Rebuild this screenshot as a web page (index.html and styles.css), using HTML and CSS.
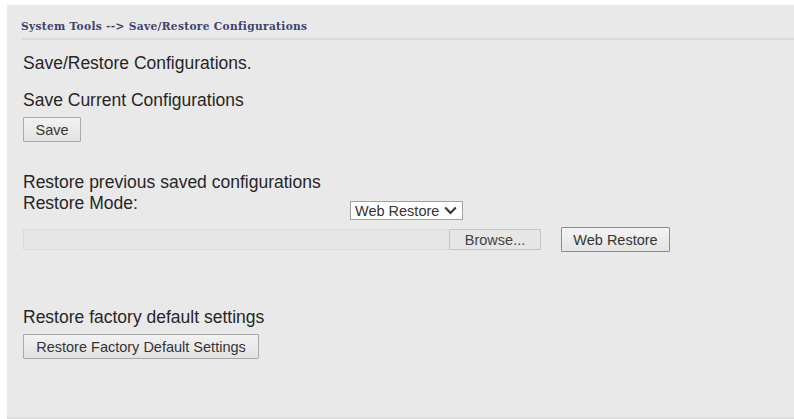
FILE: index.html
```html
<!DOCTYPE html>
<html>
<head>
<meta charset="utf-8">
<link rel="stylesheet" href="styles.css">
</head>
<body>
<div class="panel">
  <div class="crumb">System Tools --&gt; Save/Restore Configurations</div>
  <div class="content">
    <div class="title">Save/Restore Configurations.</div>

    <div class="heading first">Save Current Configurations</div>
    <button class="btn save">Save</button>

    <div class="heading restore">Restore previous saved configurations</div>
    <div class="mode-row">
      <span class="label">Restore Mode:</span>
      <span class="select">Web Restore
        <svg class="chev" width="13" height="9" viewBox="0 0 13 9"><path d="M1.2 1.5 L6.5 7 L11.8 1.5" fill="none" stroke="#333" stroke-width="2"/></svg>
      </span>
    </div>
    <div class="file-row">
      <span class="file-field"></span>
      <span class="btn browse">Browse...</span>
      <button class="btn web">Web Restore</button>
    </div>

    <div class="heading factory">Restore factory default settings</div>
    <button class="btn factory-btn">Restore Factory Default Settings</button>
  </div>
</div>
</body>
</html>
```

FILE: styles.css
```css
html, body {
  margin: 0;
  padding: 0;
  background: #ffffff;
}

body {
  padding: 5px 0 0 7px;
  font-family: "Liberation Sans", Arial, sans-serif;
}

.panel {
  background: #e9e9e9;
  height: 414px;
  border-bottom: 2px solid #dcdcdc;
  box-sizing: border-box;
  padding-left: 14px;
}

.crumb {
  font-family: "DejaVu Serif", serif;
  font-weight: bold;
  font-size: 10.6px;
  letter-spacing: 0.33px;
  color: #3d4270;
  padding-top: 14px;
  height: 19px;
  line-height: 15px;
  border-bottom: 2px solid #dadada;
}

.content {
  padding-left: 2px;
  color: #262626;
}

.title,
.heading,
.label {
  font-size: 17.5px;
  line-height: 20px;
}

.title { margin-top: 13px; }

.heading.first { margin-top: 17px; }
.heading.restore { margin-top: 30px; }
.heading.factory { margin-top: 55px; }

.btn {
  display: flex;
  align-items: center;
  justify-content: center;
  box-sizing: border-box;
  font-family: "Liberation Sans", Arial, sans-serif;
  font-size: 14.5px;
  color: #353535;
  background: linear-gradient(#f2f2f2, #e2e2e2);
  border: 1px solid #a9a9a9;
  border-radius: 1px;
  padding: 0;
}

.save {
  width: 58px;
  height: 25px;
  margin-top: 7px;
}

.mode-row {
  display: flex;
  align-items: flex-start;
  height: 27px;
  margin-top: 1px;
}

.label {
  width: 327px;
}

.select {
  display: flex;
  align-items: center;
  box-sizing: border-box;
  width: 113px;
  height: 19px;
  background: #fff;
  border: 1px solid #a0a0a0;
  font-size: 14.5px;
  color: #333;
  padding-left: 4px;
  margin-top: 8px;
}

.chev { margin-left: 5px; }

.file-row {
  display: flex;
  align-items: center;
  margin-top: 7px;
  height: 25px;
}

.file-field {
  width: 426px;
  height: 21px;
  box-sizing: border-box;
  border: 1px solid #dcdcdc;
  border-right: none;
  background: #e6e6e6;
}

.browse {
  width: 92px;
  height: 21px;
  border-color: #c4c4c4;
  background: #e6e6e6;
  color: #444;
}

.web {
  width: 109px;
  height: 25px;
  margin-left: 20px;
  border: 1px solid #8c8c8c;
  background: linear-gradient(#f4f4f4, #e4e4e4);
}

.factory-btn {
  width: 236px;
  height: 25px;
  margin-top: 7px;
}
```
